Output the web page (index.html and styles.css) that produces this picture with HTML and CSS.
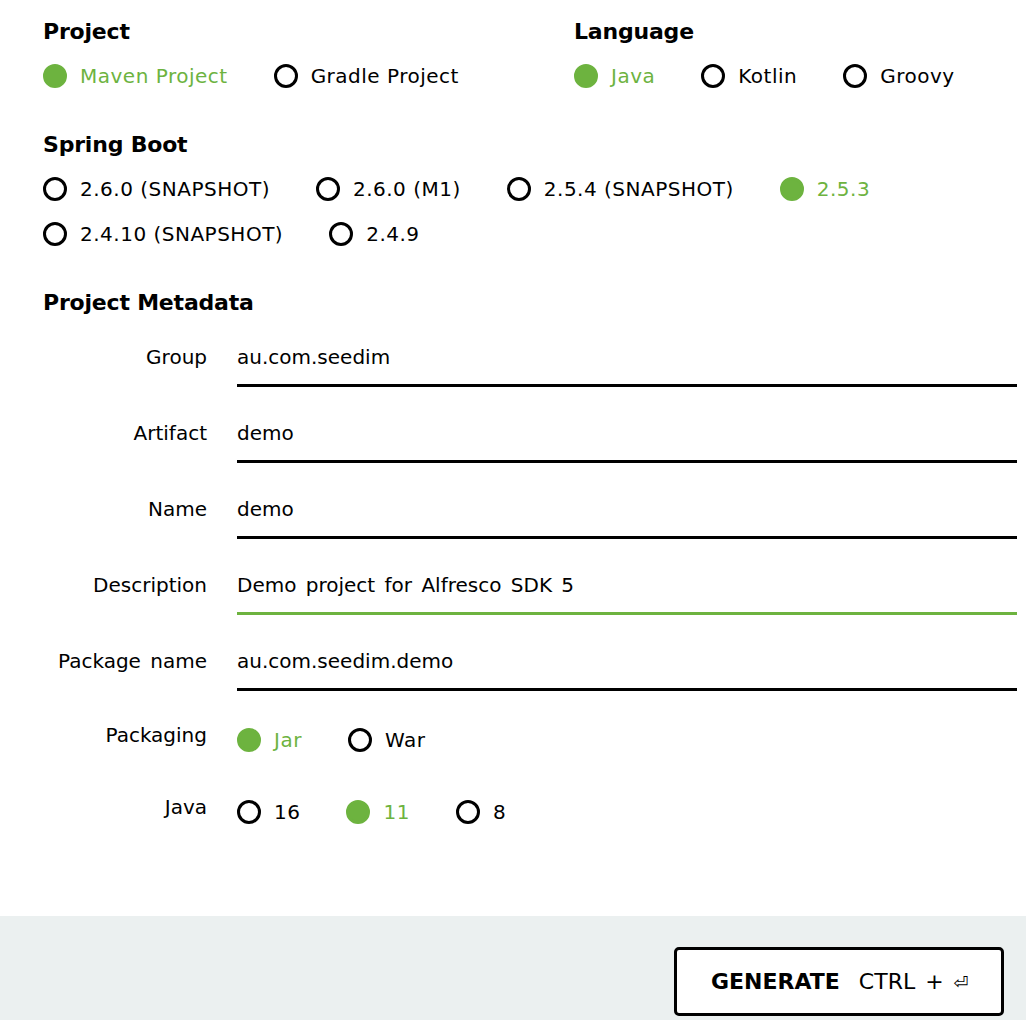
FILE: index.html
```html
<!DOCTYPE html>
<html>
<head>
    <title>Spring Initializr</title>
    <link rel="stylesheet" href="styles.css">
</head>
<body>
    <main class="form">
        <div class="top-row">
            <section class="group">
                <h2>Project</h2>
                <div class="radio-row">
                    <label class="radio checked"><span class="dot"></span>Maven Project</label>
                    <label class="radio"><span class="dot"></span>Gradle Project</label>
                </div>
            </section>
            <section class="group">
                <h2>Language</h2>
                <div class="radio-row">
                    <label class="radio checked"><span class="dot"></span>Java</label>
                    <label class="radio"><span class="dot"></span>Kotlin</label>
                    <label class="radio"><span class="dot"></span>Groovy</label>
                </div>
            </section>
        </div>

        <section class="group">
            <h2>Spring Boot</h2>
            <div class="radio-row">
                <label class="radio"><span class="dot"></span>2.6.0 (SNAPSHOT)</label>
                <label class="radio"><span class="dot"></span>2.6.0 (M1)</label>
                <label class="radio"><span class="dot"></span>2.5.4 (SNAPSHOT)</label>
                <label class="radio checked"><span class="dot"></span>2.5.3</label>
            </div>
            <div class="radio-row">
                <label class="radio"><span class="dot"></span>2.4.10 (SNAPSHOT)</label>
                <label class="radio"><span class="dot"></span>2.4.9</label>
            </div>
        </section>

        <section class="group metadata">
            <h2>Project Metadata</h2>
            <div class="field">
                <label for="group">Group</label>
                <input id="group" type="text" value="au.com.seedim">
            </div>
            <div class="field">
                <label for="artifact">Artifact</label>
                <input id="artifact" type="text" value="demo">
            </div>
            <div class="field">
                <label for="name">Name</label>
                <input id="name" type="text" value="demo">
            </div>
            <div class="field">
                <label for="description">Description</label>
                <input id="description" class="focused" type="text" value="Demo project for Alfresco SDK 5">
            </div>
            <div class="field">
                <label for="packageName">Package name</label>
                <input id="packageName" type="text" value="au.com.seedim.demo">
            </div>
            <div class="field radio-field">
                <label class="field-label">Packaging</label>
                <div class="radio-row">
                    <label class="radio checked"><span class="dot"></span>Jar</label>
                    <label class="radio"><span class="dot"></span>War</label>
                </div>
            </div>
            <div class="field radio-field">
                <label class="field-label">Java</label>
                <div class="radio-row">
                    <label class="radio"><span class="dot"></span>16</label>
                    <label class="radio checked"><span class="dot"></span>11</label>
                    <label class="radio"><span class="dot"></span>8</label>
                </div>
            </div>
        </section>
    </main>

    <footer class="actions">
        <button type="button" class="generate">
            <strong>GENERATE</strong>
            <span class="shortcut">CTRL + <span class="enter">&#x23CE;</span></span>
        </button>
    </footer>
</body>
</html>
```

FILE: styles.css
```css
body {
    margin: 0;
    font-family: "DejaVu Sans", "Open Sans", sans-serif;
    color: #000;
    background-color: #fff;
    word-spacing: 3px;
}
.form {
    padding: 18px 9px 59px 43px;
}
.top-row {
    display: grid;
    grid-template-columns: 531px 1fr;
}
.group {
    margin-bottom: 41px;
}
.group:last-child {
    margin-bottom: 0;
}
h2 {
    margin: 0 0 16px;
    font-size: 22px;
    line-height: 28px;
    font-weight: 700;
    word-spacing: 0;
    letter-spacing: -0.2px;
}
.radio-row {
    display: flex;
    height: 28px;
    align-items: center;
}
.radio-row + .radio-row {
    margin-top: 17px;
}
.radio {
    display: flex;
    align-items: center;
    margin-right: 46px;
    font-size: 20px;
    line-height: 28px;
    letter-spacing: 0.5px;
    word-spacing: 0;
    cursor: pointer;
}
.dot {
    width: 24px;
    height: 24px;
    box-sizing: border-box;
    border: 3px solid #000;
    border-radius: 50%;
    margin-right: 13px;
}
.radio.checked {
    color: #6db33f; /* spring green */
}
.radio.checked .dot {
    border-color: #6db33f;
    background-color: #6db33f;
}

/* metadata */
.field {
    display: flex;
    margin-bottom: 22px;
}
.field > label,
.field-label {
    width: 164px;
    flex-shrink: 0;
    margin-right: 30px;
    text-align: right;
    font-size: 20px;
    line-height: 28px;
    padding-top: 10px;
}
.field input {
    flex: 1;
    min-width: 0;
    padding: 10px 0 13px;
    border: 0;
    border-bottom: 3px solid #000;
    font-family: inherit;
    font-size: 20px;
    line-height: 28px;
    word-spacing: 3px;
    color: #000;
    outline: none;
    background: transparent;
}
.field input.focused {
    border-bottom-color: #6db33f;
}
.radio-field {
    margin-bottom: 31px;
}
.radio-field .field-label {
    padding-top: 8px;
}
.radio-field .radio-row {
    margin-top: 13px;
}

/* footer */
.actions {
    display: flex;
    justify-content: flex-end;
    padding: 31px 22px 40px;
    background-color: #ebf0f0;
}
.generate {
    display: flex;
    align-items: center;
    width: 330px;
    height: 69px;
    padding: 0 0 0 34px;
    border: 3px solid #000;
    border-radius: 5px;
    background-color: #fff;
    color: #000;
    font-family: inherit;
    font-size: 22px;
    word-spacing: 3px;
    cursor: pointer;
}
.generate strong {
    font-weight: 700;
    margin-right: 19px;
}
.shortcut {
    font-weight: 400;
}
.enter {
    font-size: 18px;
}
```
